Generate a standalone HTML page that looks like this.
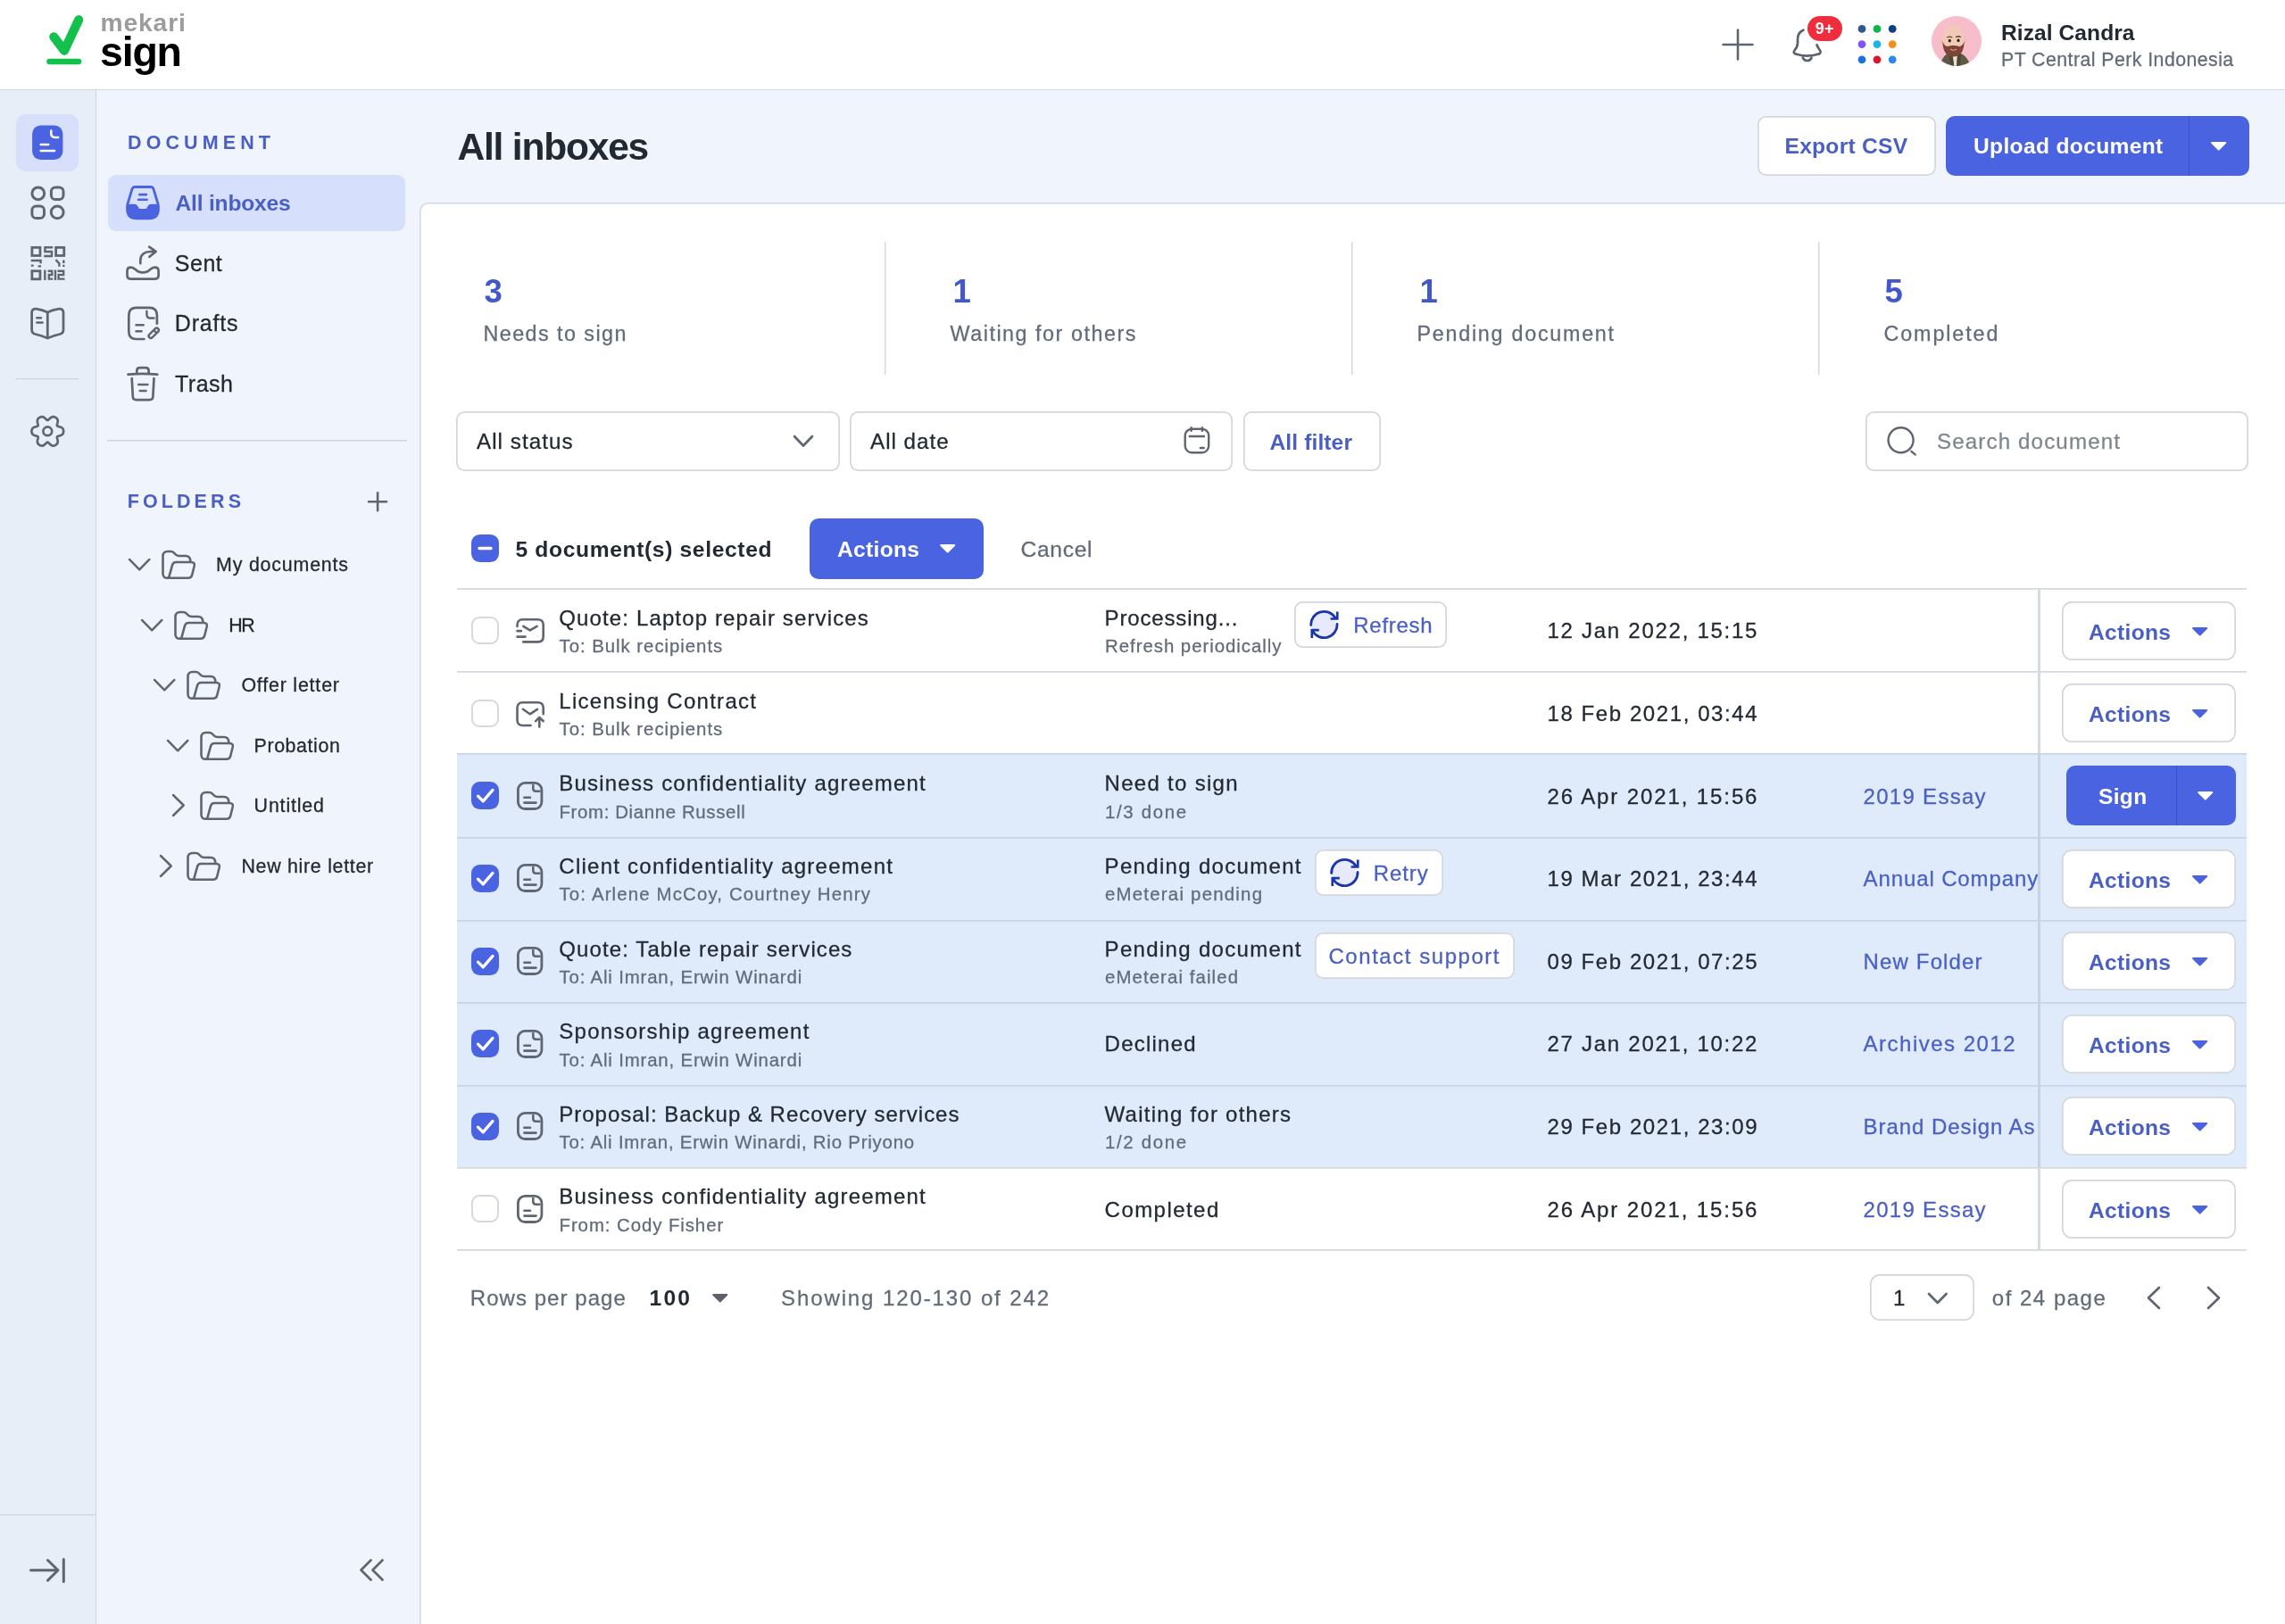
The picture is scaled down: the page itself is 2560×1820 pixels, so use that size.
<!DOCTYPE html>
<html lang="en"><head><meta charset="utf-8"><title>Mekari Sign - All inboxes</title>
<style>
*{box-sizing:border-box;margin:0;padding:0}
html,body{width:2560px;height:1820px;overflow:hidden}
body{position:relative;background:#f0f5fd;font-family:"Liberation Sans",sans-serif;color:#232933;-webkit-font-smoothing:antialiased}
header,nav,aside,main,section,div,span,svg,button,h1,h2,ul,li,a,p{position:absolute;white-space:nowrap}
button{font-family:inherit;border:0;background:none;cursor:pointer}
svg{overflow:visible}
header,nav.rail,aside,main{will-change:transform}
.st{fill:none;stroke:#5f6671;stroke-width:2.7;stroke-linecap:round;stroke-linejoin:round}
.sb{fill:none;stroke:#1b36ad;stroke-width:2.7;stroke-linecap:round;stroke-linejoin:round}
.sw{fill:none;stroke:#fff;stroke-width:2.7;stroke-linecap:round;stroke-linejoin:round}
header{left:0;top:0;width:2560px;height:101px;background:#fff;border-bottom:1.5px solid #d3d8e0}
nav.rail{left:0;top:101px;width:108px;height:1719px;background:#e7eef7;border-right:1px solid #ced5de}
aside{left:108px;top:101px;width:362px;height:1719px;background:#f0f5fd}
main{left:471px;top:101px;width:2089px;height:1719px}
.card{background:#fff;box-shadow:inset 0 0 0 1.6px #d3d7de;border-radius:9.5px 0 0 0}
.btn{box-shadow:inset 0 0 0 1.7px #d3d6db;border-radius:9.5px;background:#fff}
.pri{background:#4a63e0;border-radius:10px}
.cb{box-shadow:inset 0 0 0 2px #d5d9de;border-radius:9px;background:#fff}
.cbx{background:#4a63e0;border-radius:9.5px}
.vl{width:2px;background:linear-gradient(90deg,#d3d7de 0 50%,#eceef2 50% 100%)}
.hl{height:2px;background:linear-gradient(180deg,#cfd5df 0 50%,#e2e7f0 50% 100%)}
.row{box-shadow:inset 0 1.8px 0 #d5d9df}
.row.sel{background:#dfebfb;box-shadow:inset 0 1.8px 0 #c9d5e6}
</style></head>
<body>
<header><svg style="left:48.0px;top:12.0px;" width="52" height="66" viewBox="48 12 52 66"><path d="M60.3 41.3 L72 56.8 L88.2 22.2" fill="none" stroke="#12c14c" stroke-width="10.2" stroke-linecap="round" stroke-linejoin="round"/><path d="M55.5 69 H88" fill="none" stroke="#12c14c" stroke-width="6.5" stroke-linecap="round"/></svg><span style="left:112.5px;top:9px;font-size:28.2px;line-height:32px;color:#9c9c9c;font-weight:700;letter-spacing:0.9px;">mekari</span><span style="left:112.0px;top:32px;font-size:46.5px;line-height:52px;color:#000;font-weight:700;letter-spacing:-1.2px;">sign</span><svg style="left:1929.0px;top:32.0px;" width="36" height="36" viewBox="0 0 36 36"><path class="st" d="M18 1.5V34.5M1.5 18H34.5" style="stroke-width:2.6"/></svg><svg style="left:2006.0px;top:30.0px;" width="38" height="42" viewBox="2006 30 38 42"><path class="st" style="stroke-width:2.700;stroke:#5d636b" d="M2020.400 33.700C2016 35.500 2014 39 2014 44V48.500C2014 52 2012.500 54 2010.500 56.500C2009 58.500 2010 60 2012 60.600C2019 63.300 2030 63.300 2037.500 60.600C2039.500 60 2040.300 58.500 2039 56.500C2037.500 54.500 2036.300 52.500 2035.500 50.300M2019.800 64.800C2021 67 2022.700 68 2024.700 68S2028.400 67 2029.500 64.800"/></svg><div style="left:2025px;top:18px;width:38.7px;height:28.0px;background:#f02d3c;border-radius:14px;box-shadow:0 0 0 2px #fff;color:#fff;font-weight:700;font-size:18px;line-height:28.500px;text-align:center;letter-spacing:0.300px">9+</div><svg style="left:2080.0px;top:26.0px;" width="48" height="48" viewBox="2080 26 48 48"><circle cx="2086" cy="32.4" r="4.4" fill="#2f5a86"/><circle cx="2103" cy="32.4" r="4.4" fill="#10b34f"/><circle cx="2120.2" cy="32.4" r="4.4" fill="#0d3f86"/><circle cx="2086" cy="49.6" r="4.4" fill="#7d57f5"/><circle cx="2103" cy="49.6" r="4.4" fill="#1cb5e8"/><circle cx="2120.2" cy="49.6" r="4.4" fill="#f0901a"/><circle cx="2086" cy="66.8" r="4.4" fill="#1872d9"/><circle cx="2103" cy="66.8" r="4.4" fill="#e0142c"/><circle cx="2120.2" cy="66.8" r="4.4" fill="#2e86e8"/></svg><svg style="left:2162.0px;top:16.0px;" width="60" height="60" viewBox="2162 16 60 60"><defs><clipPath id="avc"><circle cx="2192" cy="46" r="28"/></clipPath></defs><circle cx="2192" cy="46" r="28" fill="#f7bdcb"/><g clip-path="url(#avc)"><path d="M2173 78C2174 66 2179 59.500 2187 58.500h5C2200 59.500 2206.500 66 2208.500 78z" fill="#5f5a45"/><path d="M2187.500 60h5.500l-.800 15h-3z" fill="#e8dfd0"/><path d="M2183 59.500l4.500 3 2 13h-4zM2197 59.500l-4 3-1 13h4z" fill="#4c4837"/><circle cx="2176.600" cy="47" r="2.300" fill="#e9bca8"/><circle cx="2200.400" cy="47" r="2.300" fill="#e9bca8"/><ellipse cx="2188.500" cy="44.500" rx="12.200" ry="16" fill="#f1cab7"/><path d="M2176.400 46C2176.400 58 2181 63.500 2188.500 63.500S2200.600 58 2200.600 46C2199.500 50 2197.500 52 2194.500 52C2191.500 50.800 2185.500 50.800 2182.500 52C2179.500 52 2177.500 50 2176.400 46z" fill="#7e4537"/><path d="M2185.500 55.500q3 1.500 6 0" fill="none" stroke="#d9a594" stroke-width="1.200" stroke-linecap="round"/><ellipse cx="2184.300" cy="45.600" rx="1.500" ry="1.900" fill="#2b1d17"/><ellipse cx="2194" cy="45.300" rx="1.500" ry="1.900" fill="#2b1d17"/><path d="M2181.800 41.800q2.500-1.500 5 0M2191.500 41.500q2.500-1.500 5 0" fill="none" stroke="#6b3a2c" stroke-width="1.300" stroke-linecap="round"/></g></svg><span style="left:2242.0px;top:23px;font-size:24.6px;line-height:27px;color:#232933;font-weight:700;letter-spacing:0.05px;">Rizal Candra</span><span style="left:2242.0px;top:55px;font-size:21.3px;line-height:24px;color:#626b79;-webkit-text-stroke:0.28px;letter-spacing:0.45px;">PT Central Perk Indonesia</span></header><nav class="rail"><div style="left:18px;top:27px;width:70.4px;height:63.8px;background:#d7dffa;border-radius:11px"></div><svg style="left:34.0px;top:37.0px;" width="40" height="44" viewBox="34 138 40 44"><rect x="36.100" y="140.400" width="34.300" height="38.700" rx="9.500" fill="#4a63e0"/><path class="sw" style="stroke-width:2.5" d="M57.300 146.600V149.600Q57.300 154 61.500 154H65.200M45.700 161.900h8.500M45.700 169h15.400"/></svg><svg style="left:32.0px;top:105.0px;" width="44" height="44" viewBox="32 206 44 44"><g class="st" style="stroke-width:3"><circle cx="42.800" cy="216.800" r="6.900"/><rect x="57.400" y="210" width="13.600" height="13.600" rx="4.600"/><rect x="35.900" y="231" width="13.600" height="13.600" rx="4.600"/><circle cx="64.200" cy="237.900" r="6.900"/></g></svg><svg style="left:32.0px;top:173.0px;" width="44" height="44" viewBox="32 274 44 44"><g class="st" style="stroke-width:2.800;stroke-linecap:butt;stroke-linejoin:miter"><rect x="35.850" y="277.350" width="9.100" height="9.100"/><rect x="62.650" y="277.350" width="9.100" height="9.100"/><rect x="35.850" y="303.700" width="9.100" height="9.100"/><path style="stroke-width:2.400" d="M59.200 277.200H50.400V282H58V287H49.200"/><path style="stroke-width:2.400" d="M34.600 292H45.600V295.300M34.800 297.600H37.600M42.600 298.400H46"/><path style="stroke-width:2.400" d="M62.400 291.200L66.400 295.200V298.800M71.300 291.400V295M71.300 296.800V299"/><path style="stroke-width:2.400" d="M50.300 302.500V314M53.600 303.800H58.300V308H54.800V312.600H59.300M62 302.500V314M64.400 303.800H71.200V308H65.600V312.600H72.500"/></g></svg><svg style="left:32.0px;top:241.0px;" width="44" height="42" viewBox="32 342 44 42"><path class="st" style="stroke-width:2.800" d="M53.300 350C49.500 348 45 346.800 40.500 346.200Q35.600 345.800 35.600 350.500V369.500Q35.600 373.600 39.600 374.500C44.500 375.600 49 377 53.300 379C57.600 377 62 375.600 67 374.500Q71 373.600 71 369.500V350.500Q71 345.800 66.100 346.200C61.600 346.800 57.100 348 53.300 350ZM53.300 350V379"/><path class="st" style="stroke-width:2.500" d="M41.300 356.200h4.700M41.300 361.600h6.300"/></svg><div class="hl" style="left:17px;top:323px;width:71.0px;height:2.0px;"></div><svg style="left:30.0px;top:359.0px;" width="48" height="48" viewBox="30 460 48 48"><path class="st" d="M71.15 483.30L71.10 484.23L70.91 485.15L70.52 486.03L69.87 486.82L68.95 487.49L67.80 488.01L66.56 488.39L65.41 488.69L64.52 489.02L64.00 489.48L63.86 490.16L64.02 491.09L64.34 492.24L64.63 493.50L64.76 494.76L64.64 495.89L64.27 496.85L63.71 497.62L63.01 498.25L62.23 498.76L61.39 499.18L60.50 499.47L59.55 499.58L58.54 499.42L57.49 498.95L56.47 498.21L55.52 497.33L54.69 496.48L53.96 495.87L53.30 495.65L52.64 495.87L51.91 496.48L51.08 497.33L50.13 498.21L49.11 498.95L48.06 499.42L47.05 499.58L46.10 499.47L45.21 499.18L44.38 498.76L43.59 498.25L42.89 497.62L42.33 496.85L41.96 495.89L41.84 494.76L41.97 493.50L42.26 492.24L42.58 491.09L42.74 490.16L42.60 489.48L42.08 489.02L41.19 488.69L40.04 488.39L38.80 488.01L37.65 487.49L36.73 486.82L36.08 486.03L35.69 485.15L35.50 484.23L35.45 483.30L35.50 482.37L35.69 481.45L36.08 480.57L36.73 479.78L37.65 479.11L38.80 478.59L40.04 478.21L41.19 477.91L42.08 477.58L42.60 477.12L42.74 476.44L42.58 475.51L42.26 474.36L41.97 473.10L41.84 471.84L41.96 470.71L42.33 469.75L42.89 468.98L43.59 468.35L44.37 467.84L45.21 467.42L46.10 467.13L47.05 467.02L48.06 467.18L49.11 467.65L50.13 468.39L51.08 469.27L51.91 470.12L52.64 470.73L53.30 470.95L53.96 470.73L54.69 470.12L55.52 469.27L56.47 468.39L57.49 467.65L58.54 467.18L59.55 467.02L60.50 467.13L61.39 467.42L62.23 467.84L63.01 468.35L63.71 468.98L64.27 469.75L64.64 470.71L64.76 471.84L64.63 473.10L64.34 474.36L64.02 475.51L63.86 476.44L64.00 477.12L64.52 477.58L65.41 477.91L66.56 478.21L67.80 478.59L68.95 479.11L69.87 479.78L70.52 480.57L70.91 481.45L71.10 482.37Z"/><circle class="st" cx="53.300" cy="483.300" r="4.900"/></svg><div class="hl" style="left:0px;top:1596px;width:107.0px;height:2.0px;"></div><svg style="left:30.0px;top:1641.0px;" width="48" height="36" viewBox="30 1742 48 36"><path class="st" style="stroke-width:3" d="M34.500 1759.800h30M53.500 1748.500l11.500 11.300-11.500 11.300M71.300 1747.500v25"/></svg></nav><aside><h2 style="left:35.0px;top:47px;font-size:21.5px;line-height:24px;color:#4a5fc4;font-weight:700;letter-spacing:5.1px;">DOCUMENT</h2><div style="left:13px;top:95px;width:333.0px;height:62.8px;background:#d6dffb;border-radius:9px"></div><svg style="left:31.0px;top:105.0px;" width="42" height="42" viewBox="139 206 42 42"><path d="M151.300 209.500H168.700Q171.200 209.500 172 211.900L177 228.500Q177.400 230 177.400 231.500V234.300Q177.400 244.800 166.900 244.800H153.100Q142.600 244.800 142.600 234.300V231.500Q142.600 230 143 228.500L148 211.900Q148.800 209.500 151.300 209.500Z" fill="none" stroke="#4a63e0" stroke-width="2.800" stroke-linejoin="round"/><path d="M142.600 229.600H151Q152.600 229.600 153.400 231L154.800 233.400Q155.600 234.700 157.200 234.700H162.800Q164.400 234.700 165.200 233.400L166.600 231Q167.400 229.600 169 229.600H177.400V234.300Q177.400 244.800 166.900 244.800H153.100Q142.600 244.800 142.600 234.300Z" fill="#4a63e0" stroke="#4a63e0" stroke-width="1.500" stroke-linejoin="round"/><path d="M156.300 218.100H163.900M155 223.700H164.600" fill="none" stroke="#4a63e0" stroke-width="2.600" stroke-linecap="round"/></svg><span style="left:88.5px;top:113px;font-size:24.6px;line-height:27px;color:#4a5fc4;font-weight:700;letter-spacing:-0.2px;">All inboxes</span><svg style="left:31.0px;top:173.0px;" width="42" height="42" viewBox="139 274 42 42"><path class="st" d="M142.500 303.500Q142.500 299.600 146.500 299.600Q149.500 299.600 151.500 301.800Q155 305.400 160 305.400T168.500 301.800Q170.500 299.600 173.500 299.600Q177.600 299.600 177.600 303.500V308.800Q177.600 312.600 173.800 312.600H146.300Q142.500 312.600 142.500 308.800Z"/><path class="st" d="M157.300 295.200V291.500C157.300 285.500 162 282 168 282H173.600M167.200 276.600L174.600 281.900L167.400 287.800"/></svg><span style="left:87.8px;top:180px;font-size:25px;line-height:28px;color:#232933;-webkit-text-stroke:0.28px;letter-spacing:0.5px;">Sent</span><svg style="left:33.0px;top:241.0px;" width="42" height="42" viewBox="141 342 42 42"><path class="st" d="M175.900 362.700V353.400Q175.900 344.900 167.400 344.900H152.800Q144.300 344.900 144.300 353.400V371.500Q144.300 380 152.800 380H161.400"/><path class="st" style="stroke-width:2.500" d="M164.400 348.700V352.600Q164.400 356.400 168.200 356.400H172.500"/><path class="st" style="stroke-width:2.500" d="M152.500 364.200H160.700M152.500 371.200H158.500"/><path class="st" style="stroke-width:2.400" d="M173.800 368.300L167.300 374.800A2.400 2.400 0 0 0 170.700 378.200L177.200 371.700A2.400 2.400 0 0 0 173.800 368.300ZM172.200 369.900L175.600 373.300"/></svg><span style="left:87.8px;top:247px;font-size:25px;line-height:28px;color:#232933;-webkit-text-stroke:0.28px;letter-spacing:0.8px;">Drafts</span><svg style="left:33.0px;top:308.0px;" width="40" height="42" viewBox="141 409 40 42"><path class="st" d="M143.500 419.600Q160 418 176.300 419.600M153.300 418.400V415.400Q153.300 412.200 156.500 412.200H163.400Q166.600 412.200 166.600 415.400V418.400"/><path class="st" d="M147.700 424L148.800 444.200Q149 448.100 152.900 448.100H167.300Q171.200 448.100 171.400 444.200L172.500 424"/><path class="st" style="stroke-width:2.500" d="M155.200 431.100H165.400M156.700 438.100H163.500"/></svg><span style="left:88.0px;top:315px;font-size:25px;line-height:28px;color:#232933;-webkit-text-stroke:0.28px;letter-spacing:0.5px;">Trash</span><div class="hl" style="left:12px;top:392px;width:336.0px;height:2.0px;"></div><h2 style="left:34.7px;top:449px;font-size:21.5px;line-height:24px;color:#4a5fc4;font-weight:700;letter-spacing:4.1px;">FOLDERS</h2><svg style="left:302.0px;top:447.5px;" width="26" height="26" viewBox="0 0 26 26"><path class="st" style="stroke-width:2.600" d="M13.100 3.200v20M3.100 13.200h20"/></svg><svg style="left:34.0px;top:522.8px;" width="28.4" height="17.4" viewBox="142.0 623.8 28.4 17.4"><path class="st" style="stroke-width:2.5;" d="M145.0 626.8l11.2 11.4 11.2 -11.4"/></svg><svg style="left:73.0px;top:515.9px;" width="39" height="32" viewBox="181.0 616.9 39 32"><g transform="translate(181.0 616.9)"><path class="st" style="stroke-width:2.600" d="M6.500 30.800Q1.500 30.800 1.500 25.800V6.200Q1.500 1 6.700 1H10.200Q12.500 1 14 2.600L16 4.600Q17.500 6 19.800 6H27Q32 6 32.300 11.700"/><path class="st" style="stroke-width:2.600" d="M8.100 30.600L12 16.400Q12.900 13 16.400 13H33.300Q37.600 13 36.700 17.200L34.200 27.200Q33.300 30.800 29.600 30.800H6.500"/></g></svg><span style="left:134.0px;top:520px;font-size:21.4px;line-height:24px;color:#232933;-webkit-text-stroke:0.28px;letter-spacing:0.81px;">My documents</span><svg style="left:48.2px;top:590.5px;" width="28.4" height="17.4" viewBox="156.2 691.5 28.4 17.4"><path class="st" style="stroke-width:2.5;" d="M159.2 694.5l11.2 11.4 11.2 -11.4"/></svg><svg style="left:87.2px;top:583.6px;" width="39" height="32" viewBox="195.2 684.6 39 32"><g transform="translate(195.2 684.6)"><path class="st" style="stroke-width:2.600" d="M6.500 30.800Q1.500 30.800 1.500 25.800V6.200Q1.500 1 6.700 1H10.200Q12.500 1 14 2.600L16 4.600Q17.500 6 19.800 6H27Q32 6 32.300 11.700"/><path class="st" style="stroke-width:2.600" d="M8.100 30.600L12 16.400Q12.900 13 16.400 13H33.300Q37.600 13 36.700 17.200L34.200 27.200Q33.300 30.800 29.600 30.800H6.500"/></g></svg><span style="left:148.2px;top:588px;font-size:21.4px;line-height:24px;color:#232933;-webkit-text-stroke:0.28px;letter-spacing:-1.41px;">HR</span><svg style="left:62.4px;top:658.0px;" width="28.4" height="17.4" viewBox="170.4 759.0 28.4 17.4"><path class="st" style="stroke-width:2.5;" d="M173.4 762.0l11.2 11.4 11.2 -11.4"/></svg><svg style="left:101.4px;top:651.1px;" width="39" height="32" viewBox="209.4 752.1 39 32"><g transform="translate(209.4 752.1)"><path class="st" style="stroke-width:2.600" d="M6.500 30.800Q1.500 30.800 1.500 25.800V6.200Q1.500 1 6.700 1H10.200Q12.500 1 14 2.600L16 4.600Q17.500 6 19.800 6H27Q32 6 32.300 11.700"/><path class="st" style="stroke-width:2.600" d="M8.100 30.600L12 16.400Q12.900 13 16.400 13H33.300Q37.600 13 36.700 17.200L34.200 27.200Q33.300 30.800 29.600 30.800H6.500"/></g></svg><span style="left:162.4px;top:655px;font-size:21.4px;line-height:24px;color:#232933;-webkit-text-stroke:0.28px;letter-spacing:0.81px;">Offer letter</span><svg style="left:76.6px;top:725.5px;" width="28.4" height="17.4" viewBox="184.6 826.5 28.4 17.4"><path class="st" style="stroke-width:2.5;" d="M187.6 829.5l11.2 11.4 11.2 -11.4"/></svg><svg style="left:115.6px;top:718.6px;" width="39" height="32" viewBox="223.6 819.6 39 32"><g transform="translate(223.6 819.6)"><path class="st" style="stroke-width:2.600" d="M6.500 30.800Q1.500 30.800 1.500 25.800V6.200Q1.500 1 6.700 1H10.200Q12.500 1 14 2.600L16 4.600Q17.500 6 19.800 6H27Q32 6 32.300 11.700"/><path class="st" style="stroke-width:2.600" d="M8.100 30.600L12 16.400Q12.900 13 16.400 13H33.300Q37.600 13 36.700 17.200L34.200 27.200Q33.300 30.800 29.600 30.800H6.500"/></g></svg><span style="left:176.6px;top:723px;font-size:21.4px;line-height:24px;color:#232933;-webkit-text-stroke:0.28px;letter-spacing:0.58px;">Probation</span><svg style="left:83.4px;top:787.2px;" width="17.7" height="29" viewBox="191.4 888.2 17.7 29"><path class="st" style="stroke-width:2.5" d="M194.4 891.2l11.7 11.5 -11.7 11.5"/></svg><svg style="left:115.6px;top:786.1px;" width="39" height="32" viewBox="223.6 887.1 39 32"><g transform="translate(223.6 887.1)"><path class="st" style="stroke-width:2.600" d="M6.500 30.800Q1.500 30.800 1.500 25.800V6.200Q1.500 1 6.700 1H10.200Q12.500 1 14 2.600L16 4.600Q17.500 6 19.800 6H27Q32 6 32.300 11.700"/><path class="st" style="stroke-width:2.600" d="M8.100 30.600L12 16.400Q12.900 13 16.400 13H33.300Q37.600 13 36.700 17.200L34.200 27.200Q33.300 30.800 29.600 30.800H6.500"/></g></svg><span style="left:176.6px;top:790px;font-size:21.4px;line-height:24px;color:#232933;-webkit-text-stroke:0.28px;letter-spacing:0.84px;">Untitled</span><svg style="left:69.2px;top:854.7px;" width="17.7" height="29" viewBox="177.2 955.7 17.7 29"><path class="st" style="stroke-width:2.5" d="M180.2 958.7l11.7 11.5 -11.7 11.5"/></svg><svg style="left:101.4px;top:853.6px;" width="39" height="32" viewBox="209.4 954.6 39 32"><g transform="translate(209.4 954.6)"><path class="st" style="stroke-width:2.600" d="M6.500 30.800Q1.500 30.800 1.500 25.800V6.200Q1.500 1 6.700 1H10.200Q12.500 1 14 2.600L16 4.600Q17.500 6 19.800 6H27Q32 6 32.300 11.700"/><path class="st" style="stroke-width:2.600" d="M8.100 30.600L12 16.400Q12.900 13 16.400 13H33.300Q37.600 13 36.700 17.200L34.200 27.200Q33.300 30.800 29.600 30.800H6.500"/></g></svg><span style="left:162.4px;top:858px;font-size:21.4px;line-height:24px;color:#232933;-webkit-text-stroke:0.28px;letter-spacing:0.71px;">New hire letter</span><svg style="left:292.0px;top:1643.0px;" width="34" height="32" viewBox="400 1744 34 32"><path class="st" style="stroke-width:2.800" d="M415.500 1748.500l-11 11 11 11M428.500 1748.500l-11 11 11 11"/></svg></aside><main><h1 style="left:41.5px;top:40px;font-size:42.5px;line-height:47px;color:#232933;font-weight:700;letter-spacing:-1.2px;">All inboxes</h1><button class="btn" style="left:1498px;top:29px;width:199.5px;height:66.5px;"><span style="left:30.5px;top:20px;font-size:24.6px;line-height:27px;color:#4a5fc4;font-weight:700;letter-spacing:0.25px;">Export CSV</span></button><button class="pri" style="left:1709px;top:29px;width:339.5px;height:67.0px;"><span style="left:31.0px;top:20px;font-size:24.6px;line-height:27px;color:#fff;font-weight:700;letter-spacing:0.33px;">Upload document</span><div style="left:272px;top:0px;width:1.0px;height:67.0px;background:#3a50c8"></div><svg style="left:295.8px;top:27.5px;" width="19.5" height="11.5" viewBox="295.8 27.5 19.5 11.5"><path d="M297.9 29.5h15.1l-7.5 7.5z" fill="#fff" stroke="#fff" stroke-width="2" stroke-linejoin="round"/></svg></button><section class="card" style="left:-1px;top:126px;width:2110.0px;height:1620.0px;"><span style="left:72.5px;top:79px;font-size:36.6px;line-height:41px;color:#4358c8;font-weight:700;">3</span><span style="left:71.5px;top:134px;font-size:23.3px;line-height:26px;color:#626b79;-webkit-text-stroke:0.28px;letter-spacing:1.46px;">Needs to sign</span><div class="vl" style="left:521px;top:44px;width:2.0px;height:148.5px;"></div><span style="left:597.5px;top:79px;font-size:36.6px;line-height:41px;color:#4358c8;font-weight:700;">1</span><span style="left:594.5px;top:134px;font-size:23.3px;line-height:26px;color:#626b79;-webkit-text-stroke:0.28px;letter-spacing:1.54px;">Waiting for others</span><div class="vl" style="left:1044px;top:44px;width:2.0px;height:148.5px;"></div><span style="left:1120.5px;top:79px;font-size:36.6px;line-height:41px;color:#4358c8;font-weight:700;">1</span><span style="left:1117.5px;top:134px;font-size:23.3px;line-height:26px;color:#626b79;-webkit-text-stroke:0.28px;letter-spacing:1.75px;">Pending document</span><div class="vl" style="left:1567px;top:44px;width:2.0px;height:148.5px;"></div><span style="left:1641.5px;top:79px;font-size:36.6px;line-height:41px;color:#4358c8;font-weight:700;">5</span><span style="left:1640.5px;top:134px;font-size:23.3px;line-height:26px;color:#626b79;-webkit-text-stroke:0.28px;letter-spacing:1.9px;">Completed</span><div class="btn" style="left:41px;top:234px;width:429.5px;height:66.5px;"><span style="left:23.0px;top:20px;font-size:24.2px;line-height:27px;color:#232933;-webkit-text-stroke:0.28px;letter-spacing:1.05px;">All status</span><svg style="left:376.0px;top:25.2px;" width="26" height="16.5" viewBox="376.0 25.2 26 16.5"><path class="st" style="stroke-width:2.7;" d="M379.0 28.2l10.0 10.5 10.0 -10.5"/></svg></div><div class="btn" style="left:482px;top:234px;width:429.0px;height:66.5px;"><span style="left:23.0px;top:20px;font-size:24.2px;line-height:27px;color:#232933;-webkit-text-stroke:0.28px;letter-spacing:1.0px;">All date</span><svg style="left:372.0px;top:14.0px;" width="34" height="34" viewBox="372 14 34 34"><rect class="st" style="stroke-width:2.400" x="375.700" y="19.700" width="26.500" height="26.500" rx="7.600"/><path class="st" style="stroke-width:2.500" d="M382.600 18.200v3.600M394.900 18.200v3.600M380.800 27.900h16.200M392.900 41h3.800"/></svg></div><button class="btn" style="left:923px;top:234px;width:153.5px;height:66.5px;"><span style="left:29.5px;top:21px;font-size:24.6px;line-height:27px;color:#4a5fc4;font-weight:700;letter-spacing:0.1px;">All filter</span></button><div class="btn" style="left:1620px;top:234px;width:429.0px;height:66.5px;"><svg style="left:22.0px;top:15.0px;" width="38" height="38" viewBox="22 15 38 38"><circle class="st" style="stroke-width:2.400" cx="39.600" cy="32.200" r="14"/><path class="st" style="stroke-width:2.400" d="M51.400 44.800l4.300 3.600"/></svg><span style="left:80.0px;top:20px;font-size:24.2px;line-height:27px;color:#80868f;-webkit-text-stroke:0.28px;letter-spacing:1.1px;">Search document</span></div><div class="cbx" style="left:58px;top:372px;width:31.0px;height:31.0px;"><svg style="left:0;top:0" width="31" height="31" viewBox="0 0 31 31"><path class="sw" style="stroke-width:3.300" d="M9 15.500h13"/></svg></div><span style="left:107.5px;top:375px;font-size:24.6px;line-height:27px;color:#232933;font-weight:700;letter-spacing:0.65px;">5 document(s) selected</span><button class="pri" style="left:437px;top:354px;width:195.0px;height:67.5px;"><span style="left:31.0px;top:21px;font-size:24.6px;line-height:27px;color:#fff;font-weight:700;letter-spacing:0.3px;">Actions</span><svg style="left:144.8px;top:27.9px;" width="19.5" height="11.5" viewBox="144.8 27.9 19.5 11.5"><path d="M146.9 29.9h15.1l-7.5 7.5z" fill="#fff" stroke="#fff" stroke-width="2" stroke-linejoin="round"/></svg></button><span style="left:673.5px;top:375px;font-size:24.6px;line-height:27px;color:#626b79;-webkit-text-stroke:0.28px;letter-spacing:0.7px;">Cancel</span><div class="row" style="left:42px;top:432px;width:2005.0px;height:93.0px;"><div class="cb" style="left:16px;top:32px;width:31.0px;height:31.0px;"></div><svg style="left:66.0px;top:34.2px;" width="33" height="29" viewBox="578.0 693.2 33 29"><g transform="translate(578.0 693.2)"><path class="st" style="stroke-width:2.600" d="M1.500 9V7.500Q1.500 1.300 7.700 1.300H24.500Q30.700 1.300 30.700 7.500V20.200Q30.700 26.400 24.500 26.400H8.200"/><path class="st" style="stroke-width:2.600" d="M8.300 8.800l7.500 4.600 7.800-4.600"/><path class="st" style="stroke-width:2.600" d="M1.500 14.100h4.500M1.500 20.600h9"/></g></svg><span style="left:114.3px;top:20px;font-size:24px;line-height:27px;color:#232933;-webkit-text-stroke:0.28px;letter-spacing:1.13px;">Quote: Laptop repair services</span><span style="left:114.5px;top:54px;font-size:20.4px;line-height:22px;color:#626b79;-webkit-text-stroke:0.28px;letter-spacing:0.96px;">To: Bulk recipients</span><span style="left:725.6px;top:20px;font-size:24px;line-height:27px;color:#232933;-webkit-text-stroke:0.28px;letter-spacing:0.84px;">Processing...</span><span style="left:726.0px;top:54px;font-size:20.4px;line-height:22px;color:#626b79;-webkit-text-stroke:0.28px;letter-spacing:0.97px;">Refresh periodically</span><button class="btn" style="left:938px;top:15px;width:171.0px;height:52.3px;"><svg style="left:16.8px;top:10.2px;" width="33" height="33" viewBox="16.8 10.2 33 33"><g transform="translate(16.8 10.2)"><circle cx="16.400" cy="16" r="13.500" fill="#e7eafc"/><path class="sb" style="stroke-width:2.800" d="M1.710 16.510A14.700 14.700 0 0 1 29.130 8.650M31.090 15.490A14.700 14.700 0 0 1 3.670 23.350"/><path d="M31.250 1.600V9.500H23.600M2.800 31V22.100H10.800" fill="none" stroke="#1b36ad" stroke-width="2.700" stroke-linecap="butt" stroke-linejoin="miter"/><path d="M31.250 6V9.500H28zM2.800 25.600V22.100H6z" fill="#1b36ad" stroke="#1b36ad" stroke-width="1" stroke-linejoin="round"/></g></svg><span style="left:66.3px;top:13px;font-size:24px;line-height:27px;color:#4a5fc4;-webkit-text-stroke:0.28px;letter-spacing:0.71px;">Refresh</span></button><span style="left:1221.5px;top:34px;font-size:24px;line-height:27px;color:#232933;-webkit-text-stroke:0.28px;letter-spacing:1.73px;">12 Jan 2022, 15:15</span><div style="left:1771px;top:0px;width:2.8px;height:94.0px;background:#d6dae1"></div><button class="btn" style="left:1798px;top:15px;width:194.5px;height:66.0px;border-radius:11px"><span style="left:30.0px;top:21px;font-size:24.6px;line-height:27px;color:#4a5fc4;font-weight:700;letter-spacing:0.3px;">Actions</span><svg style="left:144.8px;top:27.5px;" width="19.5" height="11.5" viewBox="144.8 27.5 19.5 11.5"><path d="M146.9 29.5h15.1l-7.5 7.5z" fill="#4a63e0" stroke="#4a63e0" stroke-width="2" stroke-linejoin="round"/></svg></button></div><div class="row" style="left:42px;top:525px;width:2005.0px;height:92.0px;"><div class="cb" style="left:16px;top:32px;width:31.0px;height:31.0px;"></div><svg style="left:66.0px;top:33.6px;" width="33" height="30" viewBox="578.0 785.6 33 30"><g transform="translate(578.0 785.6)"><path class="st" style="stroke-width:2.600" d="M16.600 27H7.700Q1.500 27 1.500 20.800V7.500Q1.500 1.300 7.700 1.300H24.500Q30.700 1.300 30.700 7.500V14.300"/><path class="st" style="stroke-width:2.600" d="M7.900 8.800l7.800 5.500 8.300-5.500"/><path class="st" style="stroke-width:2.600" d="M26.300 28.600V18M22.200 22.200l4.100-4.200 4.500 4.200"/></g></svg><span style="left:114.3px;top:20px;font-size:24px;line-height:27px;color:#232933;-webkit-text-stroke:0.28px;letter-spacing:1.29px;">Licensing Contract</span><span style="left:114.5px;top:54px;font-size:20.4px;line-height:22px;color:#626b79;-webkit-text-stroke:0.28px;letter-spacing:0.96px;">To: Bulk recipients</span><span style="left:1221.5px;top:34px;font-size:24px;line-height:27px;color:#232933;-webkit-text-stroke:0.28px;letter-spacing:1.58px;">18 Feb 2021, 03:44</span><div style="left:1771px;top:0px;width:2.8px;height:93.0px;background:#d6dae1"></div><button class="btn" style="left:1798px;top:14px;width:194.5px;height:66.0px;border-radius:11px"><span style="left:30.0px;top:21px;font-size:24.6px;line-height:27px;color:#4a5fc4;font-weight:700;letter-spacing:0.3px;">Actions</span><svg style="left:144.8px;top:27.5px;" width="19.5" height="11.5" viewBox="144.8 27.5 19.5 11.5"><path d="M146.9 29.5h15.1l-7.5 7.5z" fill="#4a63e0" stroke="#4a63e0" stroke-width="2" stroke-linejoin="round"/></svg></button></div><div class="row sel" style="left:42px;top:617px;width:2005.0px;height:94.0px;"><div class="cbx" style="left:16px;top:32px;width:31.0px;height:31.0px;"><svg style="left:0;top:0" width="31" height="31" viewBox="0 0 31 31"><path class="sw" style="stroke-width:3.300" d="M7.500 16.200l5.700 5.700 10.800-12.500"/></svg></div><svg style="left:66.9px;top:31.8px;" width="30" height="32" viewBox="578.9 875.8 30 32"><g transform="translate(578.9 875.8)"><rect class="st" style="stroke-width:2.800" x="1.400" y="1.400" width="26.500" height="29.100" rx="7.800"/><path class="st" style="stroke-width:2.600" d="M18.300 4v3.500q0 3.200 3.200 3.200h3.900M8.400 17.700h6.600M8.400 23.600h13.100"/></g></svg><span style="left:114.3px;top:20px;font-size:24px;line-height:27px;color:#232933;-webkit-text-stroke:0.28px;letter-spacing:1.2px;">Business confidentiality agreement</span><span style="left:114.5px;top:55px;font-size:20.4px;line-height:22px;color:#626b79;-webkit-text-stroke:0.28px;letter-spacing:0.64px;">From: Dianne Russell</span><span style="left:725.6px;top:20px;font-size:24px;line-height:27px;color:#232933;-webkit-text-stroke:0.28px;letter-spacing:1.29px;">Need to sign</span><span style="left:726.0px;top:55px;font-size:20.4px;line-height:22px;color:#626b79;-webkit-text-stroke:0.28px;letter-spacing:1.66px;">1/3 done</span><span style="left:1221.5px;top:35px;font-size:24px;line-height:27px;color:#232933;-webkit-text-stroke:0.28px;letter-spacing:1.89px;">26 Apr 2021, 15:56</span><span style="left:1575.6px;top:35px;font-size:24px;line-height:27px;color:#4a5fc4;-webkit-text-stroke:0.28px;letter-spacing:1.29px;">2019 Essay</span><div style="left:1771px;top:0px;width:2.8px;height:95.0px;background:#c7d3e5"></div><button class="pri" style="left:1803px;top:14px;width:190.0px;height:67.0px;"><span style="left:36.0px;top:21px;font-size:24.6px;line-height:27px;color:#fff;font-weight:700;letter-spacing:0.3px;">Sign</span><div style="left:123px;top:0px;width:1.0px;height:67.0px;background:#3a50c8"></div><svg style="left:146.2px;top:28.0px;" width="19.5" height="11.5" viewBox="146.2 28.0 19.5 11.5"><path d="M148.4 30.0h15.1l-7.5 7.5z" fill="#fff" stroke="#fff" stroke-width="2" stroke-linejoin="round"/></svg></button></div><div class="row sel" style="left:42px;top:711px;width:2005.0px;height:93.0px;"><div class="cbx" style="left:16px;top:31px;width:31.0px;height:31.0px;"><svg style="left:0;top:0" width="31" height="31" viewBox="0 0 31 31"><path class="sw" style="stroke-width:3.300" d="M7.500 16.200l5.700 5.700 10.800-12.500"/></svg></div><svg style="left:66.9px;top:30.4px;" width="30" height="32" viewBox="578.9 968.4 30 32"><g transform="translate(578.9 968.4)"><rect class="st" style="stroke-width:2.800" x="1.400" y="1.400" width="26.500" height="29.100" rx="7.800"/><path class="st" style="stroke-width:2.600" d="M18.300 4v3.500q0 3.200 3.200 3.200h3.900M8.400 17.700h6.600M8.400 23.600h13.100"/></g></svg><span style="left:114.3px;top:19px;font-size:24px;line-height:27px;color:#232933;-webkit-text-stroke:0.28px;letter-spacing:1.25px;">Client confidentiality agreement</span><span style="left:114.5px;top:53px;font-size:20.4px;line-height:22px;color:#626b79;-webkit-text-stroke:0.28px;letter-spacing:1.16px;">To: Arlene McCoy, Courtney Henry</span><span style="left:725.6px;top:19px;font-size:24px;line-height:27px;color:#232933;-webkit-text-stroke:0.28px;letter-spacing:1.32px;">Pending document</span><span style="left:726.0px;top:53px;font-size:20.4px;line-height:22px;color:#626b79;-webkit-text-stroke:0.28px;letter-spacing:1.23px;">eMeterai pending</span><button class="btn" style="left:961px;top:14px;width:144.0px;height:51.5px;"><svg style="left:16.8px;top:9.8px;" width="33" height="33" viewBox="16.8 9.8 33 33"><g transform="translate(16.8 9.8)"><circle cx="16.400" cy="16" r="13.500" fill="#e7eafc"/><path class="sb" style="stroke-width:2.800" d="M1.710 16.510A14.700 14.700 0 0 1 29.130 8.650M31.090 15.490A14.700 14.700 0 0 1 3.670 23.350"/><path d="M31.250 1.600V9.500H23.600M2.800 31V22.100H10.800" fill="none" stroke="#1b36ad" stroke-width="2.700" stroke-linecap="butt" stroke-linejoin="miter"/><path d="M31.250 6V9.500H28zM2.800 25.600V22.100H6z" fill="#1b36ad" stroke="#1b36ad" stroke-width="1" stroke-linejoin="round"/></g></svg><span style="left:65.8px;top:13px;font-size:24px;line-height:27px;color:#4a5fc4;-webkit-text-stroke:0.28px;letter-spacing:0.91px;">Retry</span></button><span style="left:1221.5px;top:33px;font-size:24px;line-height:27px;color:#232933;-webkit-text-stroke:0.28px;letter-spacing:1.58px;">19 Mar 2021, 23:44</span><span style="left:1575.6px;top:33px;font-size:24px;line-height:27px;color:#4a5fc4;-webkit-text-stroke:0.28px;letter-spacing:0.88px;">Annual Company</span><div style="left:1771px;top:0px;width:2.8px;height:94.0px;background:#c7d3e5"></div><button class="btn" style="left:1798px;top:14px;width:194.5px;height:66.0px;border-radius:11px"><span style="left:30.0px;top:21px;font-size:24.6px;line-height:27px;color:#4a5fc4;font-weight:700;letter-spacing:0.3px;">Actions</span><svg style="left:144.8px;top:27.5px;" width="19.5" height="11.5" viewBox="144.8 27.5 19.5 11.5"><path d="M146.9 29.5h15.1l-7.5 7.5z" fill="#4a63e0" stroke="#4a63e0" stroke-width="2" stroke-linejoin="round"/></svg></button></div><div class="row sel" style="left:42px;top:804px;width:2005.0px;height:92.0px;"><div class="cbx" style="left:16px;top:31px;width:31.0px;height:31.0px;"><svg style="left:0;top:0" width="31" height="31" viewBox="0 0 31 31"><path class="sw" style="stroke-width:3.300" d="M7.500 16.200l5.700 5.700 10.800-12.500"/></svg></div><svg style="left:66.9px;top:30.0px;" width="30" height="32" viewBox="578.9 1061.0 30 32"><g transform="translate(578.9 1061.0)"><rect class="st" style="stroke-width:2.800" x="1.400" y="1.400" width="26.500" height="29.100" rx="7.800"/><path class="st" style="stroke-width:2.600" d="M18.300 4v3.500q0 3.200 3.200 3.200h3.900M8.400 17.700h6.600M8.400 23.600h13.100"/></g></svg><span style="left:114.3px;top:19px;font-size:24px;line-height:27px;color:#232933;-webkit-text-stroke:0.28px;letter-spacing:1.1px;">Quote: Table repair services</span><span style="left:114.5px;top:53px;font-size:20.4px;line-height:22px;color:#626b79;-webkit-text-stroke:0.28px;letter-spacing:0.83px;">To: Ali Imran, Erwin Winardi</span><span style="left:725.6px;top:19px;font-size:24px;line-height:27px;color:#232933;-webkit-text-stroke:0.28px;letter-spacing:1.32px;">Pending document</span><span style="left:726.0px;top:53px;font-size:20.4px;line-height:22px;color:#626b79;-webkit-text-stroke:0.28px;letter-spacing:1.09px;">eMeterai failed</span><button class="btn" style="left:961px;top:14px;width:223.5px;height:51.5px;"><span style="left:15.5px;top:13px;font-size:24px;line-height:27px;color:#4a5fc4;-webkit-text-stroke:0.28px;letter-spacing:1.54px;">Contact support</span></button><span style="left:1221.5px;top:33px;font-size:24px;line-height:27px;color:#232933;-webkit-text-stroke:0.28px;letter-spacing:1.58px;">09 Feb 2021, 07:25</span><span style="left:1575.6px;top:33px;font-size:24px;line-height:27px;color:#4a5fc4;-webkit-text-stroke:0.28px;letter-spacing:1.14px;">New Folder</span><div style="left:1771px;top:0px;width:2.8px;height:93.0px;background:#c7d3e5"></div><button class="btn" style="left:1798px;top:13px;width:194.5px;height:66.0px;border-radius:11px"><span style="left:30.0px;top:21px;font-size:24.6px;line-height:27px;color:#4a5fc4;font-weight:700;letter-spacing:0.3px;">Actions</span><svg style="left:144.8px;top:27.5px;" width="19.5" height="11.5" viewBox="144.8 27.5 19.5 11.5"><path d="M146.9 29.5h15.1l-7.5 7.5z" fill="#4a63e0" stroke="#4a63e0" stroke-width="2" stroke-linejoin="round"/></svg></button></div><div class="row sel" style="left:42px;top:896px;width:2005.0px;height:93.0px;"><div class="cbx" style="left:16px;top:31px;width:31.0px;height:31.0px;"><svg style="left:0;top:0" width="31" height="31" viewBox="0 0 31 31"><path class="sw" style="stroke-width:3.300" d="M7.500 16.200l5.700 5.700 10.800-12.500"/></svg></div><svg style="left:66.9px;top:30.7px;" width="30" height="32" viewBox="578.9 1153.7 30 32"><g transform="translate(578.9 1153.7)"><rect class="st" style="stroke-width:2.800" x="1.400" y="1.400" width="26.500" height="29.100" rx="7.800"/><path class="st" style="stroke-width:2.600" d="M18.300 4v3.500q0 3.200 3.200 3.200h3.900M8.400 17.700h6.600M8.400 23.600h13.100"/></g></svg><span style="left:114.3px;top:19px;font-size:24px;line-height:27px;color:#232933;-webkit-text-stroke:0.28px;letter-spacing:1.26px;">Sponsorship agreement</span><span style="left:114.5px;top:54px;font-size:20.4px;line-height:22px;color:#626b79;-webkit-text-stroke:0.28px;letter-spacing:0.83px;">To: Ali Imran, Erwin Winardi</span><span style="left:725.6px;top:33px;font-size:24px;line-height:27px;color:#232933;-webkit-text-stroke:0.28px;letter-spacing:1.23px;">Declined</span><span style="left:1221.5px;top:33px;font-size:24px;line-height:27px;color:#232933;-webkit-text-stroke:0.28px;letter-spacing:1.73px;">27 Jan 2021, 10:22</span><span style="left:1575.6px;top:33px;font-size:24px;line-height:27px;color:#4a5fc4;-webkit-text-stroke:0.28px;letter-spacing:1.49px;">Archives 2012</span><div style="left:1771px;top:0px;width:2.8px;height:94.0px;background:#c7d3e5"></div><button class="btn" style="left:1798px;top:14px;width:194.5px;height:66.0px;border-radius:11px"><span style="left:30.0px;top:21px;font-size:24.6px;line-height:27px;color:#4a5fc4;font-weight:700;letter-spacing:0.3px;">Actions</span><svg style="left:144.8px;top:27.5px;" width="19.5" height="11.5" viewBox="144.8 27.5 19.5 11.5"><path d="M146.9 29.5h15.1l-7.5 7.5z" fill="#4a63e0" stroke="#4a63e0" stroke-width="2" stroke-linejoin="round"/></svg></button></div><div class="row sel" style="left:42px;top:989px;width:2005.0px;height:92.0px;"><div class="cbx" style="left:16px;top:31px;width:31.0px;height:31.0px;"><svg style="left:0;top:0" width="31" height="31" viewBox="0 0 31 31"><path class="sw" style="stroke-width:3.300" d="M7.500 16.200l5.700 5.700 10.800-12.500"/></svg></div><svg style="left:66.9px;top:30.3px;" width="30" height="32" viewBox="578.9 1246.3 30 32"><g transform="translate(578.9 1246.3)"><rect class="st" style="stroke-width:2.800" x="1.400" y="1.400" width="26.500" height="29.100" rx="7.800"/><path class="st" style="stroke-width:2.600" d="M18.300 4v3.500q0 3.200 3.200 3.200h3.900M8.400 17.700h6.600M8.400 23.600h13.100"/></g></svg><span style="left:114.3px;top:19px;font-size:24px;line-height:27px;color:#232933;-webkit-text-stroke:0.28px;letter-spacing:0.99px;">Proposal: Backup &amp; Recovery services</span><span style="left:114.5px;top:53px;font-size:20.4px;line-height:22px;color:#626b79;-webkit-text-stroke:0.28px;letter-spacing:0.79px;">To: Ali Imran, Erwin Winardi, Rio Priyono</span><span style="left:725.6px;top:19px;font-size:24px;line-height:27px;color:#232933;-webkit-text-stroke:0.28px;letter-spacing:1.25px;">Waiting for others</span><span style="left:726.0px;top:53px;font-size:20.4px;line-height:22px;color:#626b79;-webkit-text-stroke:0.28px;letter-spacing:1.66px;">1/2 done</span><span style="left:1221.5px;top:33px;font-size:24px;line-height:27px;color:#232933;-webkit-text-stroke:0.28px;letter-spacing:1.58px;">29 Feb 2021, 23:09</span><span style="left:1575.6px;top:33px;font-size:24px;line-height:27px;color:#4a5fc4;-webkit-text-stroke:0.28px;letter-spacing:0.94px;">Brand Design As</span><div style="left:1771px;top:0px;width:2.8px;height:93.0px;background:#c7d3e5"></div><button class="btn" style="left:1798px;top:13px;width:194.5px;height:66.0px;border-radius:11px"><span style="left:30.0px;top:21px;font-size:24.6px;line-height:27px;color:#4a5fc4;font-weight:700;letter-spacing:0.3px;">Actions</span><svg style="left:144.8px;top:27.5px;" width="19.5" height="11.5" viewBox="144.8 27.5 19.5 11.5"><path d="M146.9 29.5h15.1l-7.5 7.5z" fill="#4a63e0" stroke="#4a63e0" stroke-width="2" stroke-linejoin="round"/></svg></button></div><div class="row" style="left:42px;top:1081px;width:2005.0px;height:92.0px;"><div class="cb" style="left:16px;top:31px;width:31.0px;height:31.0px;"></div><svg style="left:66.9px;top:30.9px;" width="30" height="32" viewBox="578.9 1338.9 30 32"><g transform="translate(578.9 1338.9)"><rect class="st" style="stroke-width:2.800" x="1.400" y="1.400" width="26.500" height="29.100" rx="7.800"/><path class="st" style="stroke-width:2.600" d="M18.300 4v3.500q0 3.200 3.200 3.200h3.900M8.400 17.700h6.600M8.400 23.600h13.100"/></g></svg><span style="left:114.3px;top:19px;font-size:24px;line-height:27px;color:#232933;-webkit-text-stroke:0.28px;letter-spacing:1.2px;">Business confidentiality agreement</span><span style="left:114.5px;top:54px;font-size:20.4px;line-height:22px;color:#626b79;-webkit-text-stroke:0.28px;letter-spacing:0.93px;">From: Cody Fisher</span><span style="left:725.6px;top:34px;font-size:24px;line-height:27px;color:#232933;-webkit-text-stroke:0.28px;letter-spacing:1.45px;">Completed</span><span style="left:1221.5px;top:34px;font-size:24px;line-height:27px;color:#232933;-webkit-text-stroke:0.28px;letter-spacing:1.89px;">26 Apr 2021, 15:56</span><span style="left:1575.6px;top:34px;font-size:24px;line-height:27px;color:#4a5fc4;-webkit-text-stroke:0.28px;letter-spacing:1.29px;">2019 Essay</span><div style="left:1771px;top:0px;width:2.8px;height:93.0px;background:#d6dae1"></div><button class="btn" style="left:1798px;top:14px;width:194.5px;height:66.0px;border-radius:11px"><span style="left:30.0px;top:21px;font-size:24.6px;line-height:27px;color:#4a5fc4;font-weight:700;letter-spacing:0.3px;">Actions</span><svg style="left:144.8px;top:27.5px;" width="19.5" height="11.5" viewBox="144.8 27.5 19.5 11.5"><path d="M146.9 29.5h15.1l-7.5 7.5z" fill="#4a63e0" stroke="#4a63e0" stroke-width="2" stroke-linejoin="round"/></svg></button></div><div class="row" style="left:42px;top:1173px;width:2005.0px;height:3.0px;"></div><span style="left:56.8px;top:1214px;font-size:24px;line-height:27px;color:#626b79;-webkit-text-stroke:0.28px;letter-spacing:1.05px;">Rows per page</span><span style="left:257.5px;top:1214px;font-size:24.6px;line-height:27px;color:#232933;font-weight:700;letter-spacing:2.23px;">100</span><svg style="left:327.0px;top:1221.5px;" width="19.5" height="11.5" viewBox="797.0 1448.5 19.5 11.5"><path d="M799.2 1450.5h15.1l-7.5 7.5z" fill="#5b626d" stroke="#5b626d" stroke-width="2" stroke-linejoin="round"/></svg><span style="left:405.0px;top:1214px;font-size:24px;line-height:27px;color:#626b79;-webkit-text-stroke:0.28px;letter-spacing:1.9px;">Showing 120-130 of 242</span><div class="btn" style="left:1625px;top:1201px;width:116.6px;height:52.0px;border-radius:11px"><span style="left:26.0px;top:13px;font-size:24px;line-height:27px;color:#232933;-webkit-text-stroke:0.28px;">1</span><svg style="left:63.2px;top:18.5px;" width="25.5" height="16" viewBox="63.2 18.5 25.5 16"><path class="st" style="stroke-width:2.7;" d="M66.2 21.5l9.8 10.0 9.8 -10.0"/></svg></div><span style="left:1761.8px;top:1214px;font-size:24px;line-height:27px;color:#626b79;-webkit-text-stroke:0.28px;letter-spacing:1.51px;">of 24 page</span><svg style="left:1934.0px;top:1212.8px;" width="18" height="29" viewBox="2404.0 1439.8 18 29"><path class="st" style="stroke-width:2.7" d="M2419.0 1442.8l-12.0 11.5 12.0 11.5"/></svg><svg style="left:2001.0px;top:1212.8px;" width="18" height="29" viewBox="2471.0 1439.8 18 29"><path class="st" style="stroke-width:2.7" d="M2474.0 1442.8l12.0 11.5 -12.0 11.5"/></svg></section></main>
</body></html>
